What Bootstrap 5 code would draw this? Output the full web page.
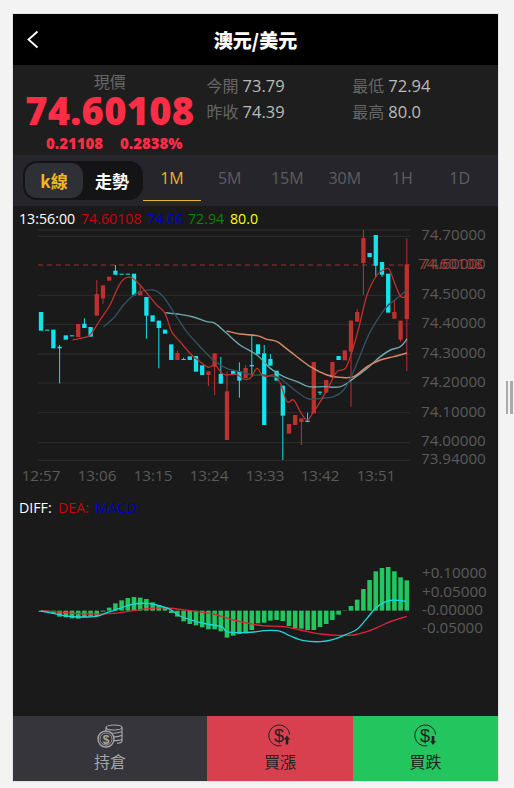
<!DOCTYPE html>
<html lang="zh-Hant">
<head>
<meta charset="utf-8">
<title>澳元/美元</title>
<link href="https://cdn.jsdelivr.net/npm/bootstrap@5.3.0/dist/css/bootstrap.min.css" rel="stylesheet">
<style>
html,body{height:100%;overflow:hidden}
body{background:#f3f3f3;font-family:"Open Sans","Noto Sans CJK TC",sans-serif;padding:14px 0 7px 13px}
.phone{width:485px;height:767px;background:#1a1a1a;box-shadow:0 0 0 1px #e2e2e2}
.grip{width:7px;height:33px;margin-left:8px;align-self:center;border-left:2px solid #aaa;border-right:3px solid #aaa}
.topbar{height:51px;background:#000;color:#fff}
.topbar svg{position:absolute;left:13px;top:16px}
.topbar h1{font:900 19px/1 "Noto Sans CJK TC",sans-serif;margin:0}
.quote{height:90px;background:#1e1e1e}
.quote-main{width:194px;padding-top:7px}
.quote-label{font:400 16px/18px "Noto Sans CJK TC",sans-serif;color:#666}
.quote-price{font:800 38px/36px "Open Sans",sans-serif;color:#ff2d46;margin-top:2px;letter-spacing:.3px}
.quote-change{font:800 15px/1 "Open Sans",sans-serif;color:#ff2d46;gap:17px;margin-top:8px;padding-left:33px}
.quote-side{padding-top:8px;font:400 16.5px/25.5px "Open Sans","Noto Sans CJK TC",sans-serif;color:#bbb}
.quote-side span{font-family:"Noto Sans CJK TC",sans-serif;font-size:16px;color:#666;margin-right:4px}
.quote-col{width:146px}
.tabbar{height:51px;background:#25252b}
.mode{width:120px;height:39px;margin-left:10px;padding:2px;background:#141416;border-radius:14px}
.mode div{flex:1;font:700 17px/35px "Noto Sans CJK TC",sans-serif;text-align:center;color:#fff}
.mode .on{flex:0 0 58px;background:#2f2f36;border-radius:12px;color:#efb71a}
.period{width:57.5px;height:46px;font-size:16px;line-height:46px;text-align:center;color:#5d5d5f;align-self:flex-start}
.period.on{color:#e8b528;border-bottom:1px solid #e8b528;width:58px}
.chart{display:block;width:485px;height:510px}
.chart text{font-family:"Open Sans",sans-serif}
.dock{height:65px}
.dock>div{font:400 16px/20px "Noto Sans CJK TC",sans-serif;padding-top:8px}
.dock-hold{width:194px;background:#35353b;color:#a6a6a8}
.dock-up{width:146px;background:#d9404f;color:#222}
.dock-down{flex:1;background:#22c55e;color:#222}
.dock svg{display:block;margin:0 auto 3px}
</style>
</head>
<body class="d-flex">
<main class="phone d-flex flex-column flex-shrink-0">
  <header class="topbar position-relative d-flex align-items-center justify-content-center">
    <svg width="14" height="19" viewBox="0 0 14 19"><path d="M11.5 1.5 2.5 9.500l9 8" fill="none" stroke="#fff" stroke-width="1.8"/></svg>
    <h1>澳元/美元</h1>
  </header>
  <section class="quote d-flex">
    <div class="quote-main">
      <div class="quote-label text-center">現價</div>
      <div class="quote-price text-center">74.60108</div>
      <div class="quote-change d-flex"><div>0.21108</div><div>0.2838%</div></div>
    </div>
    <div class="quote-side quote-col"><div><span>今開</span>73.79</div><div><span>昨收</span>74.39</div></div>
    <div class="quote-side quote-col"><div><span>最低</span>72.94</div><div><span>最高</span>80.0</div></div>
  </section>
  <nav class="tabbar d-flex align-items-center">
    <div class="mode d-flex"><div class="on">k線</div><div>走勢</div></div>
    <div class="period on">1M</div>
    <div class="period">5M</div>
    <div class="period">15M</div>
    <div class="period">30M</div>
    <div class="period">1H</div>
    <div class="period">1D</div>
  </nav>
  <svg class="chart flex-shrink-0" id="chart" viewBox="13 206 485 510" xmlns="http://www.w3.org/2000/svg">
    <g id="plot"></g>
    <g font-size="14.200">
      <text x="19" y="223.500" fill="#fff">13:56:00</text>
      <text x="81" y="223.500" fill="#c00">74.60108</text>
      <text x="147" y="223.500" fill="#00c">74.06</text>
      <text x="188" y="223.500" fill="#080">72.94</text>
      <text x="230" y="223.500" fill="#ff0">80.0</text>
      <text x="19" y="512.500" fill="#fff">DIFF:</text>
      <text x="58" y="512.500" fill="#c00">DEA:</text>
      <text x="95" y="512.500" fill="#00c">MACD:</text>
    </g>
    <g font-size="15.200" fill="#5a5a5a">
      <text x="421" y="239.500">74.70000</text>
      <text x="421" y="269">74.60000</text>
      <text x="421" y="298.500">74.50000</text>
      <text x="421" y="328">74.40000</text>
      <text x="421" y="357.500">74.30000</text>
      <text x="421" y="387">74.20000</text>
      <text x="421" y="416.500">74.10000</text>
      <text x="421" y="446">74.00000</text>
      <text x="421" y="463.500">73.94000</text>
      <text x="418" y="269" fill="#b5322f">74.60108</text>
      <text x="422" y="578">+0.10000</text>
      <text x="422" y="596.500">+0.05000</text>
      <text x="422" y="614.500">-0.00000</text>
      <text x="422" y="632.500">-0.05000</text>
      <g text-anchor="middle">
        <text x="41" y="481">12:57</text>
        <text x="97" y="481">13:06</text>
        <text x="153" y="481">13:15</text>
        <text x="209" y="481">13:24</text>
        <text x="265" y="481">13:33</text>
        <text x="320" y="481">13:42</text>
        <text x="376" y="481">13:51</text>
      </g>
    </g>
  </svg>
  <footer class="dock d-flex text-center flex-shrink-0">
    <div class="dock-hold">
      <svg width="30" height="24" viewBox="0 0 30 24" fill="none" stroke="#a6a6a8" stroke-width="1.2">
        <ellipse cx="19" cy="3.500" rx="8" ry="2.500"/>
        <path d="M11 3.500v6M27 3.500v13.500c0 1.200-2 2-5 2.300M12 8c2 1.500 9 2 15-.5M17 12.500c3 .5 7 .2 10-1.200M18 16.500c3 .4 6 0 9-1"/>
        <circle cx="11" cy="15" r="8" fill="#35353b" stroke-width="1.4"/>
        <circle cx="11" cy="15" r="6" stroke-width=".8"/>
        <text x="11" y="19.500" text-anchor="middle" font-size="12" font-weight="700" fill="#a6a6a8" stroke="none" font-family="Liberation Sans">$</text>
      </svg>
      持倉
    </div>
    <div class="dock-up">
      <svg width="26" height="24" viewBox="0 0 26 24" fill="none" stroke="#222" stroke-width="1">
        <path d="M22.700 10.500A10.500 10.500 0 1 0 14.500 21.700"/>
        <text x="12" y="17.500" text-anchor="middle" font-size="18" fill="#222" stroke="none" font-family="Liberation Sans">$</text>
        <path d="M20 11.500l3 4h-1.700v5h-2.600v-5H17z" fill="#222" stroke="none"/>
      </svg>
      買漲
    </div>
    <div class="dock-down">
      <svg width="26" height="24" viewBox="0 0 26 24" fill="none" stroke="#222" stroke-width="1">
        <path d="M22.700 10.500A10.500 10.500 0 1 0 14.500 21.700"/>
        <text x="12" y="17.500" text-anchor="middle" font-size="18" fill="#222" stroke="none" font-family="Liberation Sans">$</text>
        <path d="M18.700 12h2.600v5H23l-3 4-3-4h1.700z" fill="#222" stroke="none"/>
      </svg>
      買跌
    </div>
  </footer>
</main>
<div class="grip flex-shrink-0"></div>
<script>
(function(){
  var NS='http://www.w3.org/2000/svg', plot=document.getElementById('plot');
  function el(tag,attrs){var e=document.createElementNS(NS,tag);for(var k in attrs)e.setAttribute(k,attrs[k]);plot.appendChild(e);return e;}
  function X(i){return 41+6.2*i;}
  function K(z){return 205+z/3;}
  function M(z){return 490+z/3;}
  function smooth(pts,mapY,o){
    var p=pts.map(function(q){return [q[0]/3,mapY(q[1])];}),d='M'+p[0][0]+' '+p[0][1];
    for(var i=0;i<p.length-1;i++){
      var a=p[Math.max(i-1,0)],b=p[i],c=p[i+1],e=p[Math.min(i+2,p.length-1)];
      d+='C'+(b[0]+(c[0]-a[0])/6)+' '+(b[1]+(c[1]-a[1])/6)+' '+(c[0]-(e[0]-b[0])/6)+' '+(c[1]-(e[1]-b[1])/6)+' '+c[0]+' '+c[1];
    }
    el('path',{d:d,fill:'none',stroke:o.c,'stroke-width':o.w});
  }
  function R(a){return a.map(function(q){return [q[0]+771,q[1]];});}

  [75,94,271,358,447,534,623,713,766].forEach(function(z){
    el('rect',{x:38,y:K(z)-.5,width:372,height:1,fill:'#2d2d2d'});
  });
  el('line',{x1:38,x2:410,y1:K(180),y2:K(180),stroke:'#96332f','stroke-width':1,'stroke-dasharray':'5 4'});

  var c=[
  ['c',321,377],['c',374,377],['c',374,430],['c',425,430,420,535],['c',391,404],['c',391,394],['r',357,396],['c',356,369,340,369],['c',366,395],['r',267,332,225,332],
  ['r',241,280,241,296],['r',215,227],['c',197,209,180,209],['c',206,209],['c',206,209],['c',206,271],['r',258,271,243,271],['c',276,332,276,401],['c',331,350],['c',347,369,347,490],
  ['c',374,386],['c',418,465],['r',444,465,437,465],['c',462,465,458,465],['c',454,465],['c',453,500],['c',481,510],['r',499,510,499,543],['r',445,485,445,570],['c',507,536,456,536],
  ['r',559,705,500,705],['c',498,510],['c',498,527,472,578],['r',489,519,480,519],['c',480,484,392,515],['c',418,448],['c',445,660,420,660],['c',462,482,447,482],['c',497,527],['c',542,632,542,765],
  ['r',657,686],['r',630,660],['r',640,651,640,720],['c',647,651,623,651],['r',471,625],['c',560,563,560,570],['r',525,563],['r',471,518],['c',453,465],['r',436,466],
  ['r',347,440,347,605],['r',321,350,313,350],['r',99,174,75,270],['c',144,156],['c',90,182,90,215],['c',171,209,171,215],['c',206,323],['r',321,341,288,341],['r',347,404,347,410],['r',178,342,100,498]];
  var col={c:'#12e3ee',r:'#c0302e'};
  c.forEach(function(k,i){
    var x=X(i);
    if(k.length>3) el('rect',{x:x-.5,y:K(k[3]),width:1,height:(k[4]-k[3])/3,fill:col[k[0]]});
    el('rect',{x:x-2.15,y:K(k[1]),width:4.3,height:Math.max((k[2]-k[1])/3,1),fill:col[k[0]]});
  });

  smooth(R([[-275,323],[-231,328],[-191,336],[-151,350],[-126,355],[-91,385],[-51,420],[0,450],[40,490],[80,515],[120,530],[155,545],[200,545],[250,545],[290,520],[330,490],[370,455],[400,435],[430,425],[450,402]]),K,{c:'#6ea7ac',w:1.4});
  smooth(R([[-91,378],[-51,387],[0,392],[30,403],[60,410],[100,440],[160,485],[210,510],[250,517],[290,515],[330,485],[370,465],[410,455],[450,444]]),K,{c:'#d98a66',w:1.4});
  smooth(R([[-461,365],[-431,340],[-396,295],[-361,265],[-311,255],[-281,275],[-251,320],[-211,380],[-171,425],[-131,465],[-91,490],[-51,500],[-14,510],[20,510],[50,515],[70,520],[100,545],[150,580],[190,580],[230,575],[260,555],[285,510],[310,450],[340,380],[385,310],[420,280],[450,255]]),K,{c:'#33505f',w:1.4});
  smooth(R([[-553,405],[-531,400],[-501,390],[-471,345],[-441,300],[-416,245],[-396,220],[-376,218],[-351,240],[-326,270],[-301,300],[-276,325],[-256,380],[-231,410],[-196,450],[-171,470],[-146,487],[-126,480],[-106,505],[-91,510],[-61,508],[-41,522],[-21,520],[0,490],[15,510],[30,515],[50,510],[70,535],[90,590],[110,585],[130,620],[150,645],[170,620],[190,590],[215,545],[240,500],[265,490],[285,440],[305,370],[330,270],[360,210],[385,192],[398,195],[415,240],[432,275],[450,275]]),K,{c:'#c0302e',w:1.3});

  var h=[366,366,372,380,382,385,386,381,380,378,365,353,340,331,324,321,323,327,337,345,352,369,380,394,402,406,412,418,418,424,443,437,432,430,420,400,398,392,390,393,408,415,416,420,420,411,402,390,374,361,348,329,297,270,244,234,231,244,262,271];
  h.forEach(function(v,i){
    var top=Math.min(v,362),bot=Math.max(v,362);
    el('rect',{x:X(i)-2.3,y:M(top),width:4.6,height:(bot-top)/3,fill:'#22c55e'});
  });
  smooth(R([[-648,362],[-571,368],[-501,372],[-431,370],[-371,362],[-331,356],[-271,354],[-201,362],[-131,372],[-71,390],[0,405],[30,408],[80,410],[130,420],[190,432],[240,436],[290,435],[330,425],[360,413],[400,395],[450,379]]),M,{c:'#e0243c',w:1.3});
  smooth(R([[-648,363],[-611,370],[-571,378],[-531,381],[-481,379],[-451,368],[-411,355],[-371,342],[-331,340],[-301,345],[-261,358],[-231,378],[-191,392],[-151,402],[-106,410],[-91,425],[-51,428],[0,425],[20,422],[60,422],[80,428],[100,438],[140,452],[190,455],[230,448],[270,432],[300,418],[330,385],[355,355],[380,338],[400,331],[425,331],[447,334]]),M,{c:'#1fd6e0',w:1.3});
})();
</script>
<script src="https://cdn.jsdelivr.net/npm/bootstrap@5.3.0/dist/js/bootstrap.bundle.min.js"></script>
</body>
</html>
